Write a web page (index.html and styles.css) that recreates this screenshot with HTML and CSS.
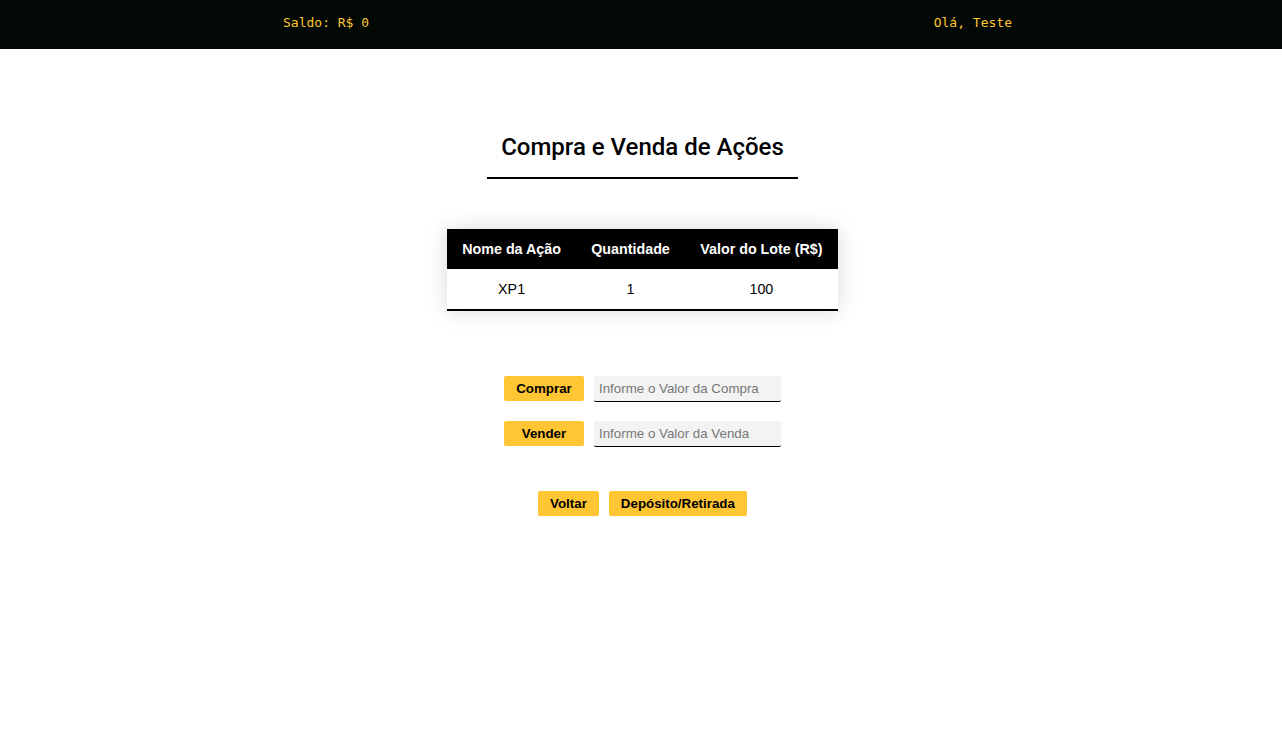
FILE: index.html
```html
<!DOCTYPE html>
<html lang="pt-BR">
<head>
<meta charset="utf-8">
<title>Compra e Venda de Ações</title>
<link rel="stylesheet" href="styles.css">
</head>
<body>
<header class="topbar">
  <span class="saldo">Saldo: R$ 0</span>
  <span class="user">Olá, Teste</span>
</header>
<main class="content">
  <h1 class="title">Compra e Venda de Ações</h1>
  <table class="stocks">
    <thead>
      <tr><th>Nome da Ação</th><th>Quantidade</th><th>Valor do Lote (R$)</th></tr>
    </thead>
    <tbody>
      <tr><td>XP1</td><td>1</td><td>100</td></tr>
    </tbody>
  </table>
  <div class="trade">
    <div class="trade-row">
      <button class="btn btn-wide">Comprar</button>
      <input class="field" type="text" placeholder="Informe o Valor da Compra">
    </div>
    <div class="trade-row">
      <button class="btn btn-wide">Vender</button>
      <input class="field" type="text" placeholder="Informe o Valor da Venda">
    </div>
  </div>
  <div class="nav">
    <button class="btn">Voltar</button>
    <button class="btn">Depósito/Retirada</button>
  </div>
</main>
</body>
</html>
```
FILE: styles.css
```css
* { box-sizing: border-box; }
body {
  margin: 0;
  background: #fff;
  font-family: "Liberation Sans", Arial, sans-serif;
}
.topbar {
  height: 49px;
  background: #020804;
  display: flex;
  justify-content: space-between;
  align-items: center;
  padding: 0 270px 4px 283px;
  font-family: "DejaVu Sans Mono", monospace;
  font-size: 13px;
  color: #ffc532;
}
.content {
  display: flex;
  flex-direction: column;
  align-items: center;
  padding-top: 84px;
  padding-left: 3px;
}
.title {
  margin: 0;
  padding: 0 14px 16px;
  font-family: Roboto, sans-serif;
  font-weight: 500;
  font-size: 24px;
  line-height: 28px;
  border-bottom: 2px solid #000;
  color: #000;
}
.stocks {
  margin-top: 50px;
  width: 391px;
  border-collapse: collapse;
  box-shadow: 0 0 20px rgba(0,0,0,0.15);
  border-bottom: 2px solid #000;
  font-size: 14.3px;
}
.stocks th {
  background: #000;
  color: #fff;
  font-weight: bold;
  height: 40px;
  padding: 0 14px;
}
.stocks td {
  text-align: center;
  height: 41px;
  padding: 0 14px;
  color: #000;
}
.trade {
  margin-top: 65px;
  display: flex;
  flex-direction: column;
  gap: 19px;
}
.trade-row {
  display: flex;
  align-items: flex-start;
  gap: 10px;
}
.btn {
  background: #ffc532;
  border: none;
  border-radius: 2px;
  height: 25px;
  padding: 0 12px;
  font-family: "Liberation Sans", Arial, sans-serif;
  font-weight: bold;
  font-size: 13.333px;
  color: #000;
}
.btn-wide { width: 80px; }
.field {
  width: 187px;
  height: 26px;
  background: #f3f3f3;
  border: none;
  border-bottom: 1px solid #000;
  border-radius: 2px;
  padding: 0 5px;
  font-family: "Liberation Sans", Arial, sans-serif;
  font-size: 13.333px;
}
.field::placeholder { color: #777; }
.nav {
  margin-top: 44px;
  display: flex;
  gap: 10px;
}
```
